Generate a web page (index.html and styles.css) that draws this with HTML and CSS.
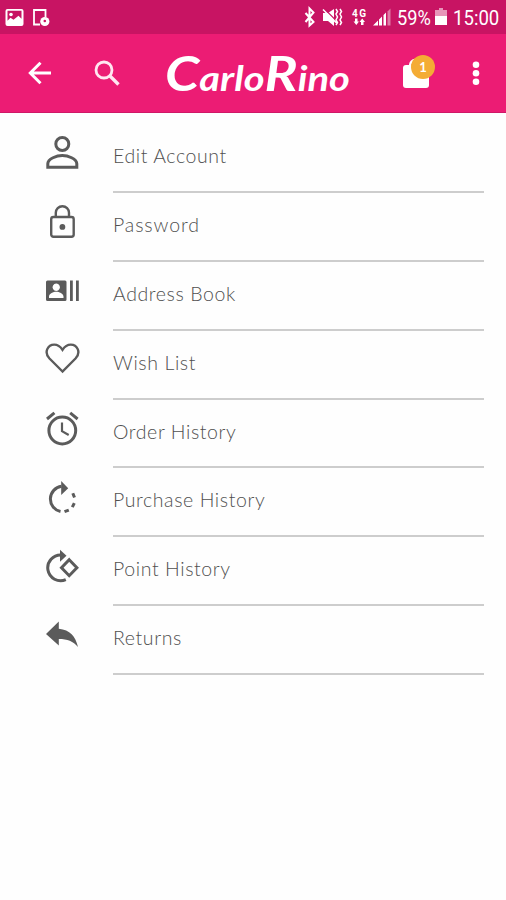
FILE: index.html
```html
<!DOCTYPE html>
<html lang="en">
<head>
	<meta charset="utf-8">
	<title>Carlo Rino - My Account</title>
	<link rel="stylesheet" href="styles.css">
</head>
<body>
	<div class="status">
		<svg class="status-left" width="52" height="34" viewBox="0 0 52 34">
			<path fill="#fff" fill-rule="evenodd" d="M7.500 9h14a2 2 0 0 1 2 2v13a2 2 0 0 1-2 2h-14a2 2 0 0 1-2-2V11a2 2 0 0 1 2-2zM7.500 10.800v10l3-3 3 2 5-4 3 3v-8z"/>
			<circle cx="11" cy="14.500" r="1.800" fill="#fff"/>
			<path d="M40 24.500h-6V10h11.500v7" fill="none" stroke="#fff" stroke-width="1.800"/>
			<circle cx="44.800" cy="21.500" r="4.600" fill="#fff"/>
			<circle cx="44.800" cy="21" r="1.300" fill="#c81463"/>
		</svg>
		<svg class="status-icons" width="92" height="34" viewBox="0 0 92 34">
			<path d="M2.500 13l8 9-4 3.500v-17l4 4-8 9.500" fill="none" stroke="#fff" stroke-width="2"/>
			<path fill="#fff" d="M20 13h5l6-4v17l-6-5h-5z"/>
			<path d="M21 8.500l16 16" stroke="#c81463" stroke-width="1.200"/>
			<path d="M20 9.500l14 14M33 9l1.500 2.500-1.500 2.500 1.500 3-1.500 3 1.500 2.500-1.500 2.500M37 9l1.500 2.500-1.500 2.500 1.500 3-1.500 3 1.500 2.500-1.500 2.500" fill="none" stroke="#fff" stroke-width="1.500"/>
			<text class="net" x="49" y="17" textLength="14">4G</text>
			<path fill="#fff" d="M52 18.500h2.500v3H56l-2.700 3.500-2.800-3.500H52zM60.500 25H58v-3h-1.500l2.700-3.500L62 22h-1.500z"/>
			<path fill="#fff" d="M70 25.500l5-5v5zM76 19.500l3-3v9h-3zM80.500 15l2.500-2.500v13h-2.500z"/>
			<path fill="#de7aa6" d="M84.500 11.500l3-3v17h-3z"/>
		</svg>
		<span class="percent">59%</span>
		<svg class="battery" width="12" height="18" viewBox="0 0 12 18">
			<path fill="#e795b9" d="M4 0h4v2h4v6H0V2h4z"/>
			<path fill="#fff" d="M0 8h12v9H0z"/>
		</svg>
		<span class="time">15:00</span>
	</div>

	<header class="bar">
		<svg class="back" width="24" height="24" viewBox="0 0 24 24">
			<path d="M23 12H3M12.500 1.800L2.300 12l10.200 10.200" fill="none" stroke="#fff" stroke-width="3"/>
		</svg>
		<svg class="search" width="26" height="26" viewBox="0 0 26 26">
			<circle cx="10" cy="10" r="8" fill="none" stroke="#ffe6f1" stroke-width="2.800"/>
			<path d="M15.500 15.500l9 9" stroke="#ffe6f1" stroke-width="3.400"/>
		</svg>
		<svg class="logo" width="190" height="76" viewBox="0 0 190 76">
			<text x="1" y="56" textLength="185" lengthAdjust="spacingAndGlyphs"><tspan class="cap">C</tspan>arlo<tspan class="cap">R</tspan>ino</text>
		</svg>
		<div class="bag">
			<svg width="28" height="32" viewBox="0 0 28 32">
				<path fill="#fff" d="M3 8h20a3 3 0 0 1 3 3v17a3 3 0 0 1-3 3H3a3 3 0 0 1-3-3V11a3 3 0 0 1 3-3z"/>
				<path d="M7 10c0-7 5-8 8-6" fill="none" stroke="#fff" stroke-width="2.500"/>
			</svg>
			<span class="badge">1</span>
		</div>
		<svg class="more" width="8" height="26" viewBox="0 0 8 26">
			<g fill="#fff">
				<circle cx="4" cy="4.800" r="3.300"/>
				<circle cx="4" cy="13.300" r="3.300"/>
				<circle cx="4" cy="21.800" r="3.300"/>
			</g>
		</svg>
	</header>

	<ul class="menu">
		<li>
			<svg class="icon" viewBox="0 0 36 36">
				<circle cx="18.300" cy="10" r="6.500"/>
				<path d="M3.800 33.200v-3.500c0-5 9-8.200 14.500-8.200s14.500 3.200 14.500 8.200v3.500z"/>
			</svg>
			<span class="label">Edit Account</span>
		</li>
		<li>
			<svg class="icon thin" viewBox="0 0 36 36">
				<rect x="7.200" y="14" width="22.500" height="19.800" rx="2.200"/>
				<path d="M11.800 14v-4.200a6.600 6.600 0 0 1 13.200 0V14"/>
				<circle class="solid" cx="18.400" cy="23.900" r="2.900"/>
			</svg>
			<span class="label w2">Password</span>
		</li>
		<li>
			<svg class="icon" viewBox="0 0 36 36">
				<path class="solid" fill-rule="evenodd" d="M3.500 8.500h17.500q1.500 0 1.500 1.500v17.500q0 1.500-1.500 1.500H3.500Q2 29 2 27.500V10q0-1.500 1.500-1.500zM12.200 11.500a3.700 3.700 0 1 0 .1 0zM5 26h14.500v-1.500c0-3-4.500-4.700-7.250-4.700S5 21.500 5 24.500z"/>
				<path class="solid" d="M26 8.500h2.800V29H26zM32 8.500h2.800V29H32z"/>
			</svg>
			<span class="label">Address Book</span>
		</li>
		<li>
			<svg class="icon thin" viewBox="0 0 36 36">
				<path d="M18.500 30.500L5.500 17.500C-.5 11 4 3.600 10.200 3.600c4 0 6.500 2.400 8.300 5.200 1.800-2.800 4.300-5.200 8.300-5.200C33 3.600 37.500 11 31.500 17.500z"/>
			</svg>
			<span class="label">Wish List</span>
		</li>
		<li>
			<svg class="icon" viewBox="0 0 36 36">
				<circle cx="18.300" cy="20.500" r="13.400"/>
				<path d="M3 9l7.400-6.100M33.600 9l-7.400-6.100"/>
				<path class="hand" d="M18 12.500v8.700l6.700 3.800"/>
			</svg>
			<span class="label">Order History</span>
		</li>
		<li>
			<svg class="icon" viewBox="0 0 36 36">
				<path d="M17.500 8.300a12.800 12.800 0 0 0-1 25.200M20.500 33.700l4.300-1.600M28.300 29.200l2-4M30.500 19.500l-1.700-4.300"/>
				<path class="solid" d="M17.200 3l7 7.200-7 6.800z"/>
			</svg>
			<span class="label">Purchase History</span>
		</li>
		<li>
			<svg class="icon" viewBox="0 0 36 36">
				<path d="M17.500 8A12.900 12.900 0 1 0 21.800 32.700"/>
				<path class="solid" d="M16 2.800l6.500 6-6.500 6z"/>
				<path d="M25.200 12.700l7.700 8-7.700 8-7.700-8z"/>
			</svg>
			<span class="label">Point History</span>
		</li>
		<li>
			<svg class="icon" viewBox="0 0 36 36">
				<path class="solid" d="M2 18L14.800 5.500v7.200C26 14 31.500 20 34 31c-5-5.700-10.500-8-19.200-8v6.500z"/>
			</svg>
			<span class="label">Returns</span>
		</li>
	</ul>
</body>
</html>
```

FILE: styles.css
```css
*{
	box-sizing: border-box;
}
body{
	margin: 0;
	background: #fefefe;
	font-family: Lato, "Open Sans", sans-serif;
}
svg{
	display: block;
	flex-shrink: 0;
}
.status{
	display: flex;
	align-items: center;
	height: 34px;
	background: #c81463;
	color: #fff;
	font: 20px/34px Roboto, sans-serif;
}
.status-icons{
	margin-left: 251px;
}
.net{
	font: bold 10px Roboto, sans-serif;
	fill: #fff;
}
.percent{
	width: 35px;
	margin: 2px 0 0 2px;
	transform: scaleX(.91);
	transform-origin: left;
}
.battery{
	margin-left: 3px;
}
.time{
	margin: 2px 0 0 6px;
	transform: scaleX(.93);
	transform-origin: left;
}
.bar{
	display: flex;
	align-items: center;
	height: 79px;
	padding-left: 28px;
	background: #ec1c74;
	border-bottom: 1px solid #cf1767;
}
.search{
	margin-left: 42px;
}
.logo{
	margin-left: 44px;
	overflow: visible;
}
.logo text{
	font: italic 700 34px Lato, cursive;
	fill: #fff;
}
.logo .cap{
	font-size: 47px;
}
.bag{
	position: relative;
	margin: -1px 0 0 49px;
}
.badge{
	position: absolute;
	top: -2px;
	left: 8px;
	width: 24px;
	height: 24px;
	border-radius: 50%;
	background: #f4ac35;
	color: #fff;
	font: bold 13px/24px Lato, sans-serif;
	text-align: center;
}
.more{
	margin-left: 41px;
}
.menu{
	margin: 0;
	padding: 11px 22px 0 44px;
	list-style: none;
}
.menu li{
	display: flex;
	height: 68.9px;
}
.icon{
	width: 36px;
	height: 36px;
	margin: 10px 33px 0 0;
	fill: none;
	stroke: #5b5b5b;
	stroke-width: 3;
}
.thin{
	stroke-width: 2.4;
}
.icon .hand{
	stroke-width: 2.2;
}
.icon .solid{
	fill: #5b5b5b;
	stroke: none;
}
.label{
	flex: 1;
	border-bottom: 2px solid #cdcdcd;
	color: #505050;
	font-size: 19.5px;
	font-weight: 300;
	line-height: 63px;
	letter-spacing: .6px;
}
.w2{
	letter-spacing: .9px;
}
```
